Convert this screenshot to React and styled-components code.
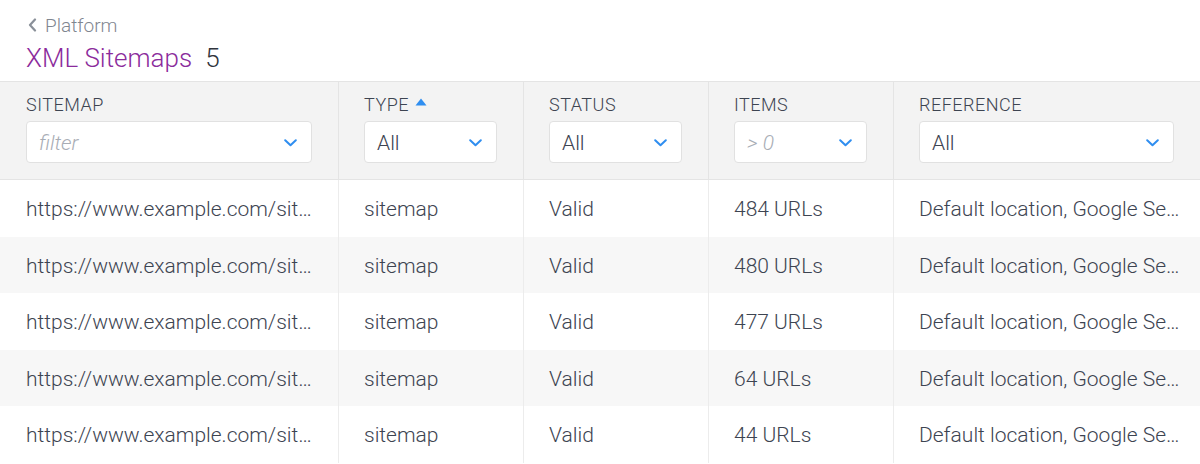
import React from 'react'
import styled, { createGlobalStyle } from 'styled-components'

const GlobalStyle = createGlobalStyle`
  html, body {
    margin: 0;
    padding: 0;
    background: #ffffff;
    font-family: Roboto, "Liberation Sans", Arial, sans-serif;
    font-weight: 300;
    color: #3d4451;
  }
`

const COLUMNS = '338px 185px 185px 185px 1fr'

const rows = [
  { url: 'https://www.example.com/sitemap-posts.xml', type: 'sitemap', status: 'Valid', items: '484 URLs' },
  { url: 'https://www.example.com/sitemap-pages.xml', type: 'sitemap', status: 'Valid', items: '480 URLs' },
  { url: 'https://www.example.com/sitemap-tags.xml', type: 'sitemap', status: 'Valid', items: '477 URLs' },
  { url: 'https://www.example.com/sitemap-authors.xml', type: 'sitemap', status: 'Valid', items: '64 URLs' },
  { url: 'https://www.example.com/sitemap-misc.xml', type: 'sitemap', status: 'Valid', items: '44 URLs' },
]

const Chevron = () => (
  <svg width="13" height="8" viewBox="0 0 13 8" fill="none">
    <path d="M1.2 1.2 L6.5 6.3 L11.8 1.2" stroke="#2f8ef0" strokeWidth="2" strokeLinecap="round" strokeLinejoin="round" />
  </svg>
)

const BackChevron = () => (
  <svg width="9" height="14" viewBox="0 0 9 14" fill="none">
    <path d="M7 1.5 L2 7 L7 12.5" stroke="#8a9099" strokeWidth="2.2" strokeLinecap="round" strokeLinejoin="round" />
  </svg>
)

const SortUp = () => (
  <svg width="12" height="8" viewBox="0 0 12 8">
    <path d="M6 0.5 L11.5 7.5 L0.5 7.5 Z" fill="#2f8ef0" />
  </svg>
)

function Filter({ value, placeholder }) {
  return (
    <Select>
      <SelectText $muted={!value}>{value || placeholder}</SelectText>
      <Chevron />
    </Select>
  )
}

export default function App() {
  return (
    <>
      <GlobalStyle />
      <Page>
        <TopBar>
          <Breadcrumb>
            <BackChevron />
            <span>Platform</span>
          </Breadcrumb>
          <Title>
            <TitleName>XML Sitemaps</TitleName>
            <Count>5</Count>
          </Title>
        </TopBar>

        <Table>
          <HeaderRow>
            <HeadCell>
              <Label>SITEMAP</Label>
              <Filter placeholder="filter" />
            </HeadCell>
            <HeadCell>
              <Label>TYPE <SortUp /></Label>
              <Filter value="All" />
            </HeadCell>
            <HeadCell>
              <Label>STATUS</Label>
              <Filter value="All" />
            </HeadCell>
            <HeadCell>
              <Label>ITEMS</Label>
              <Filter placeholder="> 0" />
            </HeadCell>
            <HeadCell>
              <Label>REFERENCE</Label>
              <Filter value="All" />
            </HeadCell>
          </HeaderRow>

          {rows.map((r, i) => (
            <Row key={i} $striped={i % 2 === 1}>
              <Cell>{r.url}</Cell>
              <Cell>{r.type}</Cell>
              <Cell>{r.status}</Cell>
              <Cell>{r.items}</Cell>
              <Cell>Default location, Google Search Console</Cell>
            </Row>
          ))}
        </Table>
      </Page>
    </>
  )
}

const Page = styled.div`
  width: 1200px;
  height: 464px;
  overflow: hidden;
`

const TopBar = styled.div`
  height: 81px;
  padding: 12px 26px 0 26px;
  box-sizing: border-box;
`

const Breadcrumb = styled.div`
  display: flex;
  align-items: center;
  gap: 8px;
  padding-left: 2px;
  height: 26px;
  font-size: 19px;
  color: #7f8690;
`

const Title = styled.div`
  display: flex;
  align-items: baseline;
  gap: 13px;
  margin-top: 4px;
  font-size: 26px;
  line-height: 32px;
`

const TitleName = styled.span`
  color: #8b2b9c;
`

const Count = styled.span`
  color: #2f343c;
`

const Table = styled.div`
  border-top: 1px solid #e4e4e4;
`

const HeaderRow = styled.div`
  display: grid;
  grid-template-columns: ${COLUMNS};
  background: #f3f3f3;
  border-bottom: 1px solid #e4e4e4;
`

const HeadCell = styled.div`
  display: flex;
  flex-direction: column;
  gap: 6px;
  padding: 11px 26px 16px 26px;
  min-width: 0;
  & + & {
    border-left: 1px solid #e4e4e4;
    padding-left: 25px;
  }
`

const Label = styled.div`
  display: flex;
  align-items: center;
  gap: 6px;
  height: 22px;
  font-size: 18px;
  letter-spacing: 0.5px;
  color: #3d4451;

  svg {
    margin-top: -4px;
  }
`

const Select = styled.div`
  display: flex;
  align-items: center;
  justify-content: space-between;
  height: 42px;
  box-sizing: border-box;
  padding: 1px 14px 0 12px;
  background: #ffffff;
  border: 1px solid #e1e1e1;
  border-radius: 4px;
`

const SelectText = styled.span`
  font-size: 21px;
  color: ${(p) => (p.$muted ? '#a8adb5' : '#3d4451')};
  font-style: ${(p) => (p.$muted ? 'italic' : 'normal')};
`

const Row = styled.div`
  display: grid;
  grid-template-columns: ${COLUMNS};
  height: 56.5px;
  background: ${(p) => (p.$striped ? '#f7f7f7' : '#ffffff')};
`

const Cell = styled.div`
  padding: 1px 26px 0 26px;
  min-width: 0;
  font-size: 21px;
  line-height: 56.5px;
  color: #3d4451;
  white-space: nowrap;
  overflow: hidden;
  text-overflow: ellipsis;

  & + & {
    border-left: 1px solid #ececec;
    padding-left: 25px;
  }

  &:last-child {
    padding-right: 16px;
  }
`
